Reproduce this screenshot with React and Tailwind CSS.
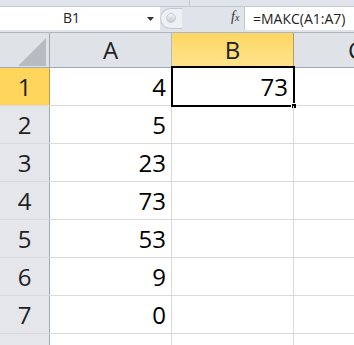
import React from "react";

const rows = [
  { n: 1, a: "4", b: "73" },
  { n: 2, a: "5" },
  { n: 3, a: "23" },
  { n: 4, a: "73" },
  { n: 5, a: "53" },
  { n: 6, a: "9" },
  { n: 7, a: "0" },
  { n: 8, a: "" },
];

const font = { fontFamily: '"Open Sans", "Noto Sans", sans-serif' };

export default function App() {
  return (
    <div className="w-[354px] h-[345px] overflow-hidden bg-white relative" style={font}>
      {/* top strip */}
      <div className="h-[7px] bg-[#dfe4ea] border-b border-[#c2c9d1] flex">
        <div className="w-[190px] shrink-0 border-r border-[#c2c9d1]" />
      </div>
      {/* formula bar */}
      <div className="h-[23px] flex bg-[#dfe4ea]">
        <div className="w-[160px] shrink-0 bg-white flex items-center relative">
          <span className="absolute left-[63px] top-[3px] text-[14px] text-[#222] leading-[16px]">B1</span>
          <svg className="absolute left-[147px] top-[10px]" width="7" height="4" viewBox="0 0 7 4">
            <path d="M0 0 H7 L3.5 4 Z" fill="#333" />
          </svg>
        </div>
        <div className="w-[84px] shrink-0 flex items-center relative">
          <div className="absolute left-[0px] top-[1px] w-[22px] h-[21px] rounded-l-full bg-[#eef1f4] border border-[#c2c9d1] border-r-0" />
          <div className="absolute left-[6px] top-[6px] w-[10px] h-[10px] rounded-full bg-gradient-to-b from-[#f4f5f7] to-[#c5cad0] border border-[#c8cdd3]" />
          <span className="absolute left-[71px] top-[2px] text-[14px] italic text-[#333] leading-[16px]" style={{ fontFamily: '"Liberation Serif", serif' }}>
            f<span className="text-[10px]">x</span>
          </span>
        </div>
        <div className="flex-1 min-w-0 bg-white border-l border-[#c2c9d1] flex items-center pl-[8px]">
          <span className="text-[14px] text-[#222] leading-[16px] whitespace-nowrap">=МАКС(A1:A7)</span>
        </div>
      </div>
      {/* gap */}
      <div className="h-[3px] bg-[#dfe4ea] border-b border-[#aeb6bf]" />
      {/* header row */}
      <div className="h-[35px] flex bg-[#dfe3e8] border-b border-[#9fa9b4]">
        <div className="w-[50px] shrink-0 border-r border-[#9fa9b4] relative">
          <svg className="absolute left-[18px] top-[5px]" width="28" height="28" viewBox="0 0 28 28">
            <path d="M0 28 L28 0 V28 Z" fill="#b6bbc1" />
          </svg>
        </div>
        <div className="w-[122px] shrink-0 border-r border-[#b3bac2] flex items-center justify-center text-[24px] text-[#222]">A</div>
        <div className="w-[122px] shrink-0 border-r border-[#c09b4e] bg-gradient-to-b from-[#fdd663] to-[#ffe48c] flex items-center justify-center text-[24px] text-[#222]">B</div>
        <div className="flex-1 min-w-0 overflow-hidden flex items-center pl-[54px] text-[24px] text-[#222] whitespace-nowrap">C</div>
      </div>
      {/* rows */}
      {rows.map((r) => (
        <div key={r.n} className="h-[38px] flex border-b border-[#d9d9d9]">
          <div
            className={
              r.n === 1
                ? "w-[50px] shrink-0 bg-[#ffd55b] border-r border-[#c09b4e] flex items-center justify-center text-[24px] text-[#222]"
                : "w-[50px] shrink-0 bg-[#e4e6ea] border-r border-[#9fa9b4] flex items-center justify-center text-[24px] text-[#222]"
            }
          >
            {r.n === 8 ? "" : r.n}
          </div>
          <div className="w-[122px] shrink-0 border-r border-[#d9d9d9] flex items-center justify-end pr-[5px] text-[24px] text-black">
            {r.a}
          </div>
          <div className="w-[122px] shrink-0 border-r border-[#d9d9d9] flex items-center justify-end pr-[5px] text-[24px] text-black relative">
            {r.b || ""}
            {r.n === 1 && (
              <>
                <div className="absolute left-[-1px] top-[-2px] right-[-2px] bottom-[-2px] border-2 border-black" />
                <div className="absolute right-[-4px] bottom-[-4px] w-[6px] h-[6px] bg-black border border-white" />
              </>
            )}
          </div>
          <div className="flex-1 min-w-0" />
        </div>
      ))}
    </div>
  );
}
